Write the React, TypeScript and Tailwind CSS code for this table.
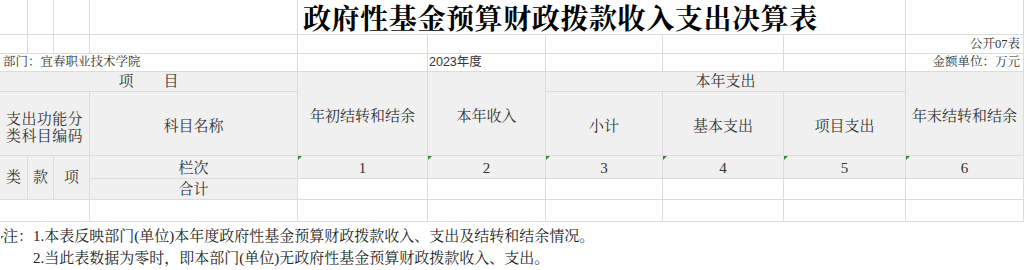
import React from "react";

const serif = "font-['Liberation_Serif','Noto_Serif_CJK_SC','Noto_Sans_CJK_SC',serif]";
const line = "border-r border-b border-[#dcdcdc]";
const head = `${line} bg-[#f0f0f0] flex items-center justify-center text-[15px] text-[#333]`;

function Tick() {
  return (
    <span className="absolute left-0 top-0 h-[4px] w-[4px] bg-[#2f8f2f] [clip-path:polygon(0_0,100%_0,0_100%)]" />
  );
}

export default function App() {
  const blank = Array.from({ length: 6 });
  return (
    <div className={`w-[1024px] h-[270px] bg-white overflow-hidden ${serif}`}>
      <div className="grid grid-cols-[28px_26px_36px_208px_130px_118px_117px_121px_122px_118px] grid-rows-[35px_19px_18px_20px_64px_23px_21px_22px]">
        {/* title row */}
        <div className={line} />
        <div className={line} />
        <div className={line} />
        <div className={line} />
        <div className={`${line} col-span-5 flex items-center pl-[5px]`}>
          <span className="text-[28px] leading-[30px] font-bold tracking-[0.6px] text-black font-['Noto_Serif_CJK_SC','Noto_Sans_CJK_SC',serif]">
            政府性基金预算财政拨款收入支出决算表
          </span>
        </div>
        <div className={line} />

        {/* row 2 */}
        {Array.from({ length: 9 }).map((_, i) => (
          <div key={i} className={line} />
        ))}
        <div className={`${line} flex items-end justify-end pr-[3px] text-[12.5px] text-[#333] leading-[18px]`}>
          公开07表
        </div>

        {/* row 3 */}
        <div className={`${line} col-span-4 flex items-end pl-[3px] text-[12.5px] text-[#333] leading-[18px]`}>
          部门：宜春职业技术学院
        </div>
        <div className={line} />
        <div className={`${line} flex items-end pl-[1px] text-[12.5px] text-[#333] leading-[18px] font-['Liberation_Sans','Noto_Sans_CJK_SC',sans-serif]`}>
          2023年度
        </div>
        <div className={line} />
        <div className={line} />
        <div className={line} />
        <div className={`${line} flex items-end justify-end pr-[3px] text-[12.5px] text-[#333] leading-[18px]`}>
          金额单位：万元
        </div>

        {/* header A */}
        <div className={`${head} col-span-4`}>项&nbsp;&nbsp;&nbsp;&nbsp;&nbsp;&nbsp;&nbsp;&nbsp;目</div>
        <div className={`${head} row-span-2 pt-[6px]`}>年初结转和结余</div>
        <div className={`${head} row-span-2 pt-[6px]`}>本年收入</div>
        <div className={`${head} col-span-3`}>本年支出</div>
        <div className={`${head} row-span-2 pt-[6px]`}>年末结转和结余</div>

        {/* header B */}
        <div className={`${head} col-span-3 pt-[9px]`}>
          <span className="leading-[17px] tracking-[0.4px] text-center">
            支出功能分
            <br />
            类科目编码
          </span>
        </div>
        <div className={`${head} pt-[6px]`}>科目名称</div>
        <div className={`${head} pt-[6px]`}>小计</div>
        <div className={`${head} pt-[6px]`}>基本支出</div>
        <div className={`${head} pt-[6px]`}>项目支出</div>

        {/* row C */}
        <div className={`${head} row-span-2`}>类</div>
        <div className={`${head} row-span-2`}>款</div>
        <div className={`${head} row-span-2`}>项</div>
        <div className={`${head} pt-[3px]`}>栏次</div>
        {[1, 2, 3, 4, 5, 6].map((n) => (
          <div key={n} className={`${head} relative pt-[3px]`}>
            <Tick />
            {n}
          </div>
        ))}

        {/* row D */}
        <div className={`${head} pt-[1px]`}>合计</div>
        {blank.map((_, i) => (
          <div key={i} className={line} />
        ))}

        {/* row E */}
        <div className={`${line} col-span-3`} />
        <div className={line} />
        {blank.map((_, i) => (
          <div key={i} className={line} />
        ))}
      </div>

      <div className="relative pl-[3px] pt-[3px] text-[15px] leading-[22px] text-[#222]">
        <span className="absolute left-[1px] top-[14px] h-[3px] w-[3px] bg-[#2f8f2f] [clip-path:polygon(0_0,100%_0,0_100%)]" />
        <div>注：1.本表反映部门(单位)本年度政府性基金预算财政拨款收入、支出及结转和结余情况。</div>
        <div className="pl-[30px]">2.当此表数据为零时，即本部门(单位)无政府性基金预算财政拨款收入、支出。</div>
      </div>
    </div>
  );
}
